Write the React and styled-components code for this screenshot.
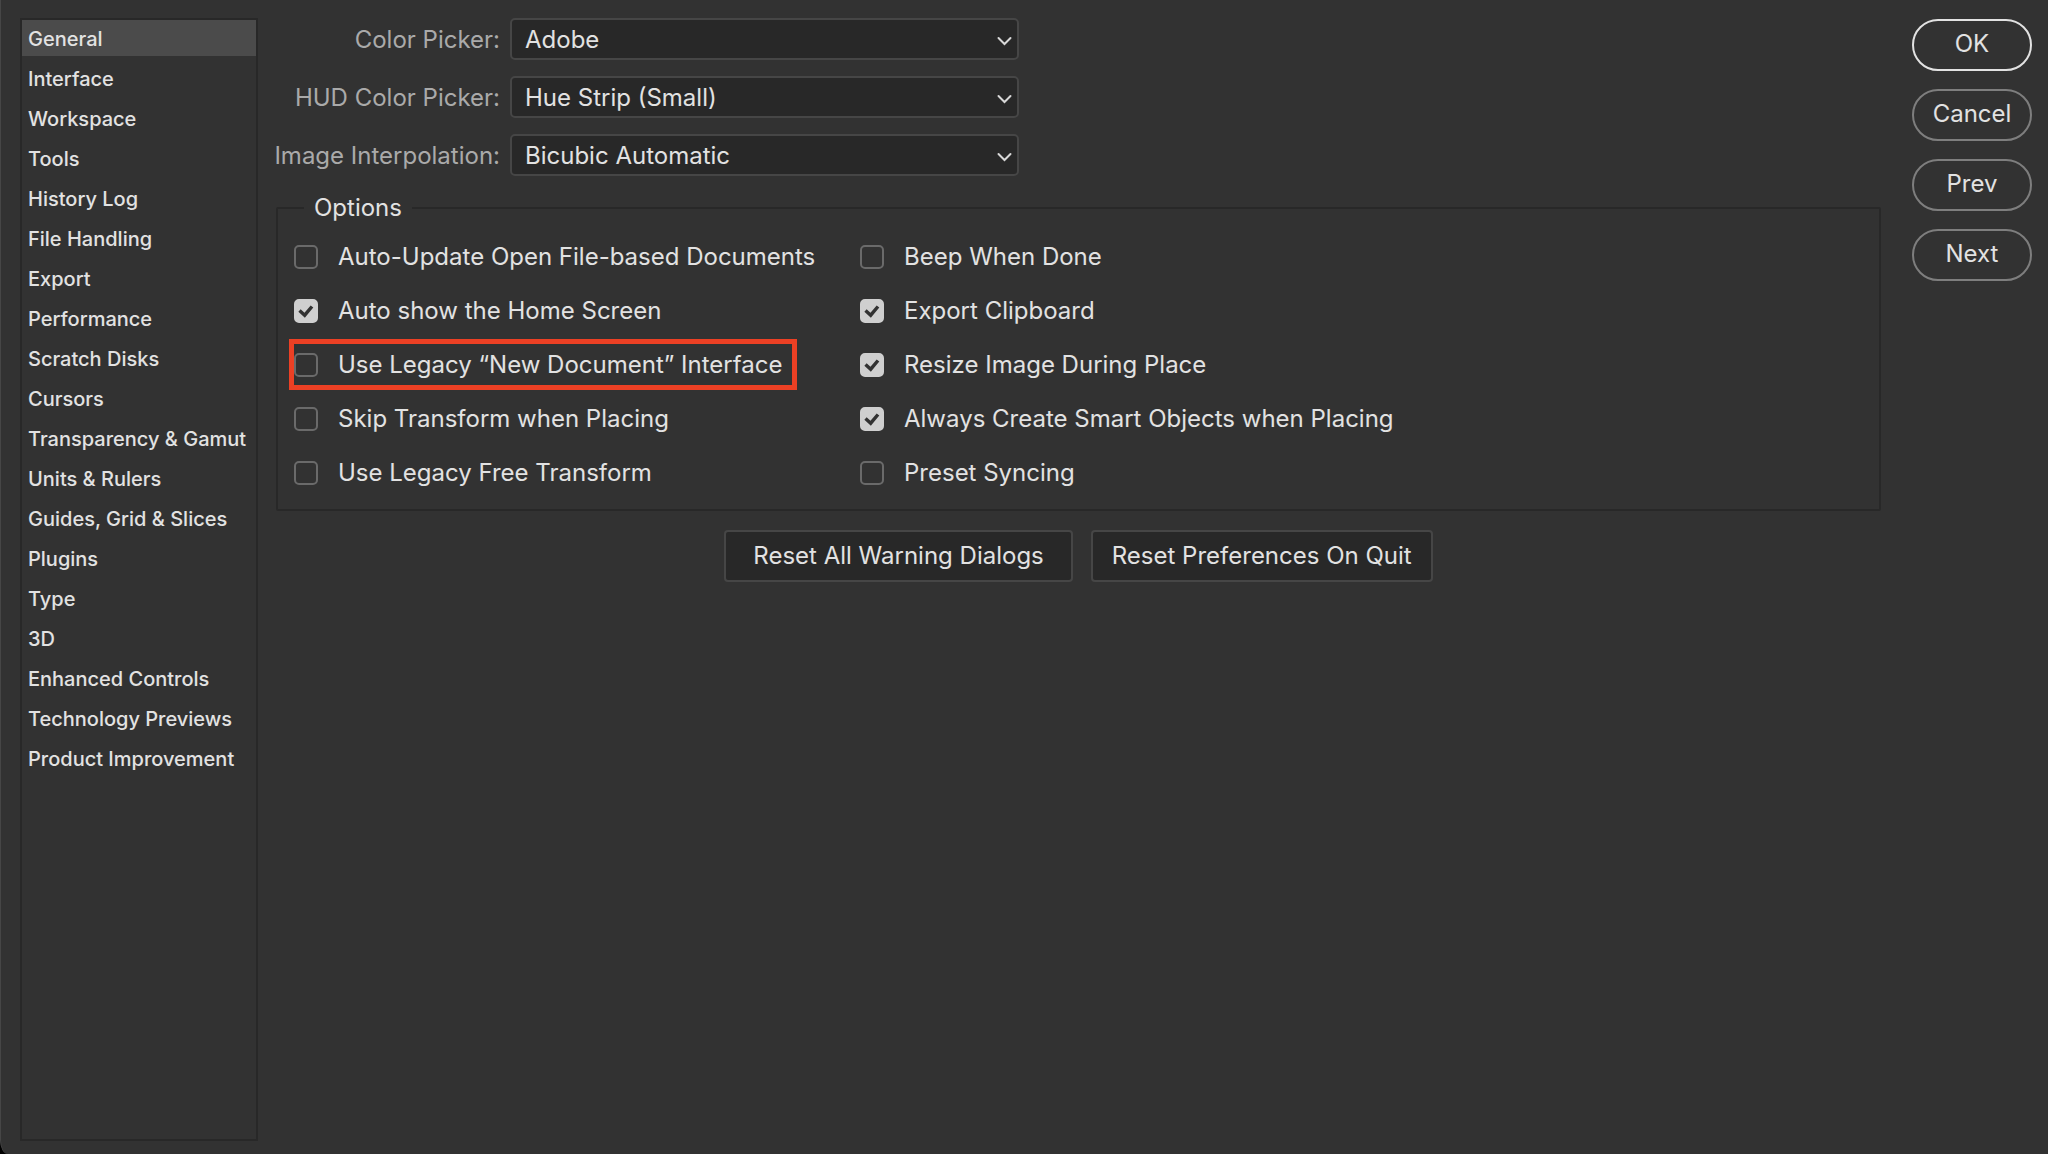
import React, { useState } from "react";
import styled, { createGlobalStyle } from "styled-components";

const GlobalStyle = createGlobalStyle`
  *, *::before, *::after {
    box-sizing: border-box;
  }
  body {
    margin: 0;
    background: #000;
    color: #e2e2e2;
    font-family: Inter, "Liberation Sans", sans-serif;
    font-size: 24px;
    line-height: 30px;
  }
  button, select, input {
    font: inherit;
    color: inherit;
  }
`;

const Dialog = styled.form`
  min-height: 100vh;
  display: flex;
  align-items: stretch;
  padding: 18px 16px 13px 19px;
  background: #323232;
  border-left: 1px solid #464646;
  border-bottom-left-radius: 8px 14px;
`;

const Sidebar = styled.nav`
  flex: 0 0 238px;
  display: flex;
  flex-direction: column;
  gap: 4px;
  border: 2px solid #282828;
`;

const SidebarItem = styled.button`
  height: 36px;
  padding: 2px 6px 0;
  border: none;
  background: ${({ $active }) => ($active ? "#4b4b4b" : "transparent")};
  font-size: 20px;
  font-weight: 500;
  line-height: 34px;
  text-align: left;
  white-space: nowrap;
`;

const Content = styled.main`
  flex: 1;
  min-width: 0;
  padding: 0 31px 0 18px;
`;

const Pickers = styled.div`
  display: flex;
  flex-direction: column;
  gap: 16px;
`;

const PickerRow = styled.div`
  display: grid;
  grid-template-columns: 224px 509px;
  column-gap: 10px;
  align-items: center;
`;

const PickerLabel = styled.label`
  justify-self: end;
  padding-top: 2px;
  color: #aaaaaa;
  white-space: nowrap;
`;

const SelectWrap = styled.div`
  position: relative;
`;

const Select = styled.select`
  display: block;
  width: 100%;
  height: 42px;
  padding: 2px 40px 0 13px;
  border: 2px solid #464646;
  border-radius: 5px;
  background: #282828;
  appearance: none;
`;

const Chevron = styled.svg`
  position: absolute;
  right: 7px;
  top: 18px;
  width: 15px;
  height: 10px;
  pointer-events: none;
`;

const OptionsBox = styled.fieldset`
  margin: 17px 0 0;
  padding: 8px 16px 11px;
  border: 2px solid #282828;
  border-radius: 2px;
`;

const Legend = styled.legend`
  margin-left: 10px;
  padding: 0 10px;
`;

const OptionsGrid = styled.div`
  display: grid;
  grid-template-columns: 566px 1fr;
`;

const OptionsColumn = styled.div`
  display: flex;
  flex-direction: column;
  align-items: flex-start;
  gap: 3px;
`;

const OptionLabel = styled.label`
  display: flex;
  align-items: center;
  gap: 20px;
  height: 51px;
  margin-left: -5px;
  padding-right: 10px;
  border: 5px solid ${({ $marked }) => ($marked ? "#ec4024" : "transparent")};
  white-space: nowrap;
`;

const CheckBox = styled.input`
  appearance: none;
  display: grid;
  place-items: center;
  width: 24px;
  height: 24px;
  margin: 0;
  border: 2px solid #6a6a6a;
  border-radius: 5px;

  &:checked {
    border-color: #cfcfcf;
    background: #cfcfcf;
  }
`;

const CheckWrap = styled.span`
  display: grid;
  align-items: center;
  justify-items: center;

  & > * {
    grid-area: 1 / 1;
  }
`;

const CheckMark = styled.svg`
  width: 16px;
  height: 16px;
  pointer-events: none;
`;

const ResetRow = styled.div`
  display: flex;
  justify-content: center;
  gap: 18px;
  margin-top: 19px;
`;

const ResetButton = styled.button`
  height: 52px;
  padding: 0 ${({ $wide }) => ($wide ? 27 : 19)}px;
  border: 2px solid #464646;
  border-radius: 4px;
  background: #282828;
`;

const Actions = styled.div`
  flex: 0 0 120px;
  display: flex;
  flex-direction: column;
  gap: 18px;
  padding-top: 1px;
`;

const ActionButton = styled.button`
  height: 52px;
  padding: 0 0 2px;
  border: 2px solid ${({ $primary }) => ($primary ? "#e2e2e2" : "#7e7e7e")};
  border-radius: 26px;
  background: transparent;
`;

const SECTIONS = [
  "General",
  "Interface",
  "Workspace",
  "Tools",
  "History Log",
  "File Handling",
  "Export",
  "Performance",
  "Scratch Disks",
  "Cursors",
  "Transparency & Gamut",
  "Units & Rulers",
  "Guides, Grid & Slices",
  "Plugins",
  "Type",
  "3D",
  "Enhanced Controls",
  "Technology Previews",
  "Product Improvement",
];

const PICKERS = [
  { id: "color-picker", label: "Color Picker:", value: "Adobe" },
  { id: "hud-picker", label: "HUD Color Picker:", value: "Hue Strip (Small)" },
  { id: "interpolation", label: "Image Interpolation:", value: "Bicubic Automatic" },
];

const OPTION_COLUMNS = [
  [
    { id: "auto-update", label: "Auto-Update Open File-based Documents" },
    { id: "home-screen", label: "Auto show the Home Screen", on: true },
    {
      id: "legacy-new",
      label: "Use Legacy “New Document” Interface",
      marked: true,
    },
    { id: "skip-transform", label: "Skip Transform when Placing" },
    { id: "legacy-transform", label: "Use Legacy Free Transform" },
  ],
  [
    { id: "beep", label: "Beep When Done" },
    { id: "export-clipboard", label: "Export Clipboard", on: true },
    { id: "resize-place", label: "Resize Image During Place", on: true },
    { id: "smart-objects", label: "Always Create Smart Objects when Placing", on: true },
    { id: "preset-sync", label: "Preset Syncing" },
  ],
];

const Option = ({ option }) => {
  const [checked, setChecked] = useState(Boolean(option.on));

  return (
    <OptionLabel htmlFor={option.id} $marked={option.marked}>
      <CheckWrap>
        <CheckBox
          type="checkbox"
          id={option.id}
          checked={checked}
          onChange={(e) => setChecked(e.target.checked)}
        />
        {checked && (
          <CheckMark viewBox="0 0 16 16" aria-hidden="true">
            <path
              d="M1.5 7.5 L6.7 12.2 L14 3.5"
              fill="none"
              stroke="#323232"
              strokeWidth="3.4"
            />
          </CheckMark>
        )}
      </CheckWrap>
      {option.label}
    </OptionLabel>
  );
};

const App = () => {
  const [section, setSection] = useState("General");

  return (
    <>
      <GlobalStyle />
      <Dialog onSubmit={(e) => e.preventDefault()}>
        <Sidebar>
          {SECTIONS.map((name) => (
            <SidebarItem
              key={name}
              type="button"
              $active={name === section}
              onClick={() => setSection(name)}
            >
              {name}
            </SidebarItem>
          ))}
        </Sidebar>

        <Content>
          <Pickers>
            {PICKERS.map((picker) => (
              <PickerRow key={picker.id}>
                <PickerLabel htmlFor={picker.id}>{picker.label}</PickerLabel>
                <SelectWrap>
                  <Select id={picker.id} defaultValue={picker.value}>
                    <option>{picker.value}</option>
                  </Select>
                  <Chevron viewBox="0 0 15 10" aria-hidden="true">
                    <path
                      d="M1.5 2 L7.5 8 L13.5 2"
                      fill="none"
                      stroke="#d8d8d8"
                      strokeWidth="2"
                      strokeLinecap="round"
                    />
                  </Chevron>
                </SelectWrap>
              </PickerRow>
            ))}
          </Pickers>

          <OptionsBox>
            <Legend>Options</Legend>
            <OptionsGrid>
              {OPTION_COLUMNS.map((column, i) => (
                <OptionsColumn key={i}>
                  {column.map((option) => (
                    <Option key={option.id} option={option} />
                  ))}
                </OptionsColumn>
              ))}
            </OptionsGrid>
          </OptionsBox>

          <ResetRow>
            <ResetButton type="button" $wide>
              Reset All Warning Dialogs
            </ResetButton>
            <ResetButton type="button">Reset Preferences On Quit</ResetButton>
          </ResetRow>
        </Content>

        <Actions>
          <ActionButton type="submit" $primary>
            OK
          </ActionButton>
          <ActionButton type="button">Cancel</ActionButton>
          <ActionButton type="button">Prev</ActionButton>
          <ActionButton type="button">Next</ActionButton>
        </Actions>
      </Dialog>
    </>
  );
};

export default App;
